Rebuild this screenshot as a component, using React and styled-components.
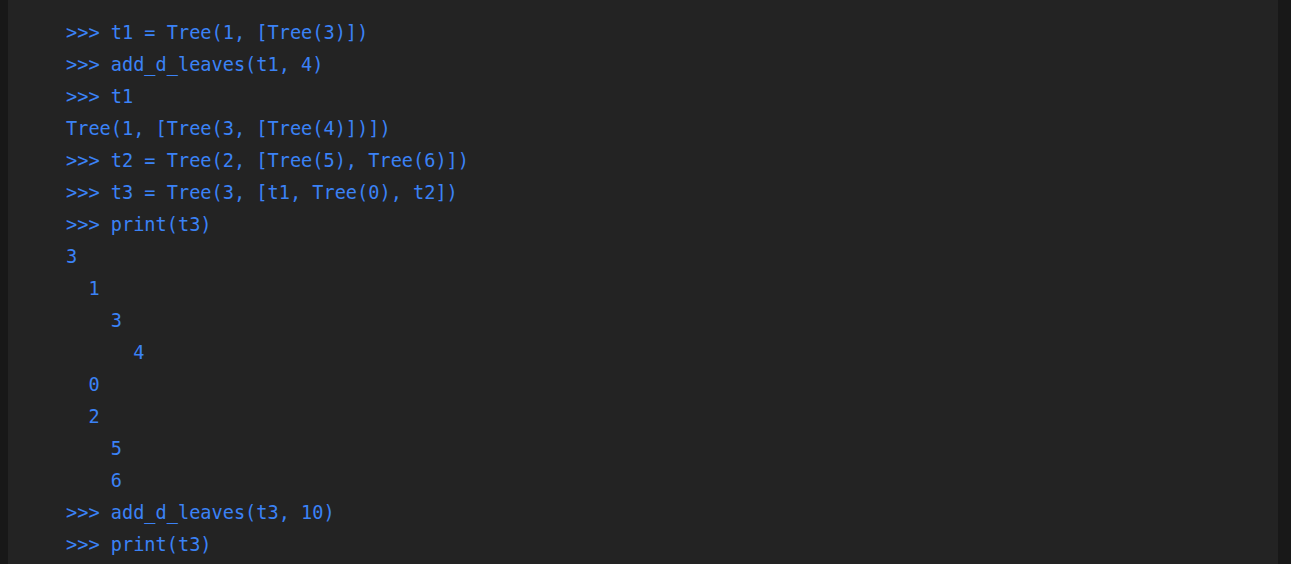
import React from "react";
import styled, { createGlobalStyle } from "styled-components";

const GlobalStyle = createGlobalStyle`
  html, body {
    margin: 0;
    padding: 0;
    background: #181818;
    height: 100%;
    overflow: hidden;
  }
`;

const lines = [
  ">>> t1 = Tree(1, [Tree(3)])",
  ">>> add_d_leaves(t1, 4)",
  ">>> t1",
  "Tree(1, [Tree(3, [Tree(4)])])",
  ">>> t2 = Tree(2, [Tree(5), Tree(6)])",
  ">>> t3 = Tree(3, [t1, Tree(0), t2])",
  ">>> print(t3)",
  "3",
  "  1",
  "    3",
  "      4",
  "  0",
  "  2",
  "    5",
  "    6",
  ">>> add_d_leaves(t3, 10)",
  ">>> print(t3)",
];

const App = () => {
  return (
    <Page>
      <GlobalStyle />
      <CodeBlock>
        <pre>
          {lines.map((line, i) => (
            <Line key={i}>{line}</Line>
          ))}
        </pre>
      </CodeBlock>
    </Page>
  );
};

const Page = styled.div`
  display: flex;
  padding: 0 13px 0 8px;
  height: 564px;
`;

const CodeBlock = styled.div`
  flex: 1;
  background: #232323;
  padding: 17px 0 0 58px;
  overflow: hidden;
  pre {
    margin: 0;
    font-family: "DejaVu Sans Mono", "Liberation Mono", monospace;
    font-size: 18.6px;
    color: #3b82f6;
  }
`;

const Line = styled.div`
  height: 32px;
  line-height: 32px;
  white-space: pre;
`;

export default App;
